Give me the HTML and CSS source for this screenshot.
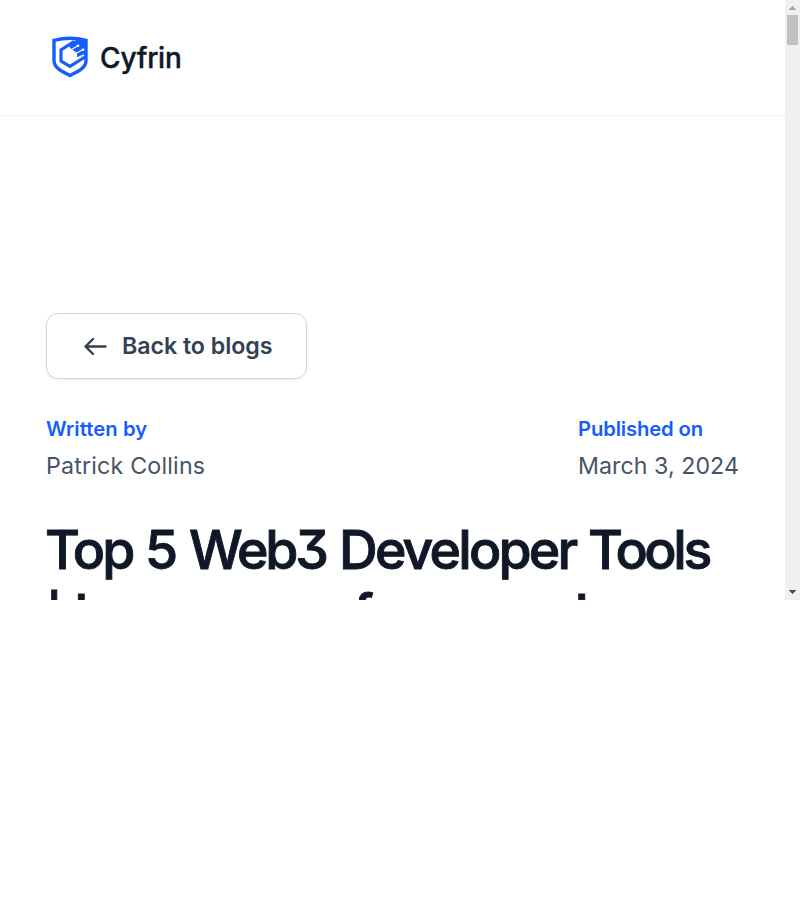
FILE: index.html
```
<!DOCTYPE html>
<html lang="en">
<head>
<meta charset="utf-8">
<title>Top 5 Web3 Developer Tools</title>
<link rel="stylesheet" href="styles.css">
</head>
<body>
<div class="viewport">
  <div class="page">
    <header class="header">
      <svg class="logo-mark" width="36" height="42" viewBox="0 0 36 42" fill="none">
        <path d="M2 4.4Q18 .2 34 4.4V24.5C34 32 26 35.5 18 39.5C10 35.5 2 32 2 24.5Z" stroke="#165dfb" stroke-width="3.4"/>
        <path d="M22 5.6L9 13.8V25.2L18 30.4L33 21" stroke="#165dfb" stroke-width="3.2"/>
        <path d="M17 8.5L24 4L35 4.5V18.5L25 22V17L23 15.5L18 12Z" fill="#165dfb"/>
        <path d="M19 13.8L25.5 10M24 17.3L30 14.2M25 21.7L32 18.8" stroke="#fff" stroke-width="1.2"/>
        <circle cx="26" cy="9.8" r="1.3" fill="#fff"/><circle cx="31" cy="13.8" r="1.3" fill="#fff"/>
      </svg>
      <span class="logo-name">Cyfrin</span>
    </header>
    <main class="article">
      <a class="back">
        <svg width="24" height="20" viewBox="0 0 24 20" fill="none" stroke="#344054" stroke-width="2.4" stroke-linecap="round" stroke-linejoin="round"><path d="M22.5 10.5H2.5M10 3L2.5 10.5L10 18"/></svg>
        <span>Back to blogs</span>
      </a>
      <div class="meta">
        <div class="meta-item"><div class="label">Written by</div><div class="value author">Patrick Collins</div></div>
        <div class="meta-item published"><div class="label">Published on</div><div class="value">March 3, 2024</div></div>
      </div>
      <h1 class="title">
        <span class="line"><span class="w-top">Top</span><span class="w-five">5</span><span class="w-web">Web3</span><span class="w-dev">Developer</span><span class="w-tools">Tools</span></span>
        <span class="line"><span class="w-bar">|</span><span class="w-improve">Improve</span><span class="w-perf">performance</span><span>in</span></span>
      </h1>
    </main>
  </div>
  <div class="scrollbar">
    <svg width="15" height="15" viewBox="0 0 15 15" shape-rendering="crispEdges"><path d="M7 6h1v1h1v1h1v1h1v1H4V9h1V8h1V7h1z" fill="#a3a3a3"/></svg>
    <div class="thumb"></div>
    <svg class="down" width="15" height="15" viewBox="0 0 15 15" shape-rendering="crispEdges"><path d="M4 5h7v1h-1v1H9v1H8v1H7V8H6V7H5V6H4z" fill="#505050"/></svg>
  </div>
</div>
</body>
</html>
```
FILE: styles.css
```
* { box-sizing: border-box; }
body { margin: 0; background: #fff; font-family: Inter, sans-serif; }
.viewport { display: flex; width: 800px; height: 600px; overflow: hidden; }
.page { width: 785px; height: 600px; overflow: hidden; }
.header { display: flex; align-items: center; height: 116px; padding: 0 0 1px 52px; border-bottom: 1px solid #f2f4f7; }
.logo-mark { flex: none; }
.logo-name { margin: 1px 0 0 12px; color: #101828; font-size: 28px; line-height: 36px; font-weight: 500; letter-spacing: -.2px; -webkit-text-stroke: .4px #101828; }
.article { padding: 197px 46px 0; }
.back { display: flex; align-items: center; width: 261px; height: 66px; padding-left: 36px; gap: 15px; border: 1px solid #d0d5dd; border-radius: 12px; box-shadow: 0 1px 3px rgba(16, 24, 40, .07); color: #344054; font-size: 23.2px; font-weight: 600; letter-spacing: -.04px; white-space: nowrap; }
.back svg { flex: none; }
.meta { display: flex; justify-content: space-between; margin-top: 35px; }
.published { width: 161px; white-space: nowrap; }
.label { color: #165dfb; font-size: 20.3px; font-weight: 600; line-height: 30px; letter-spacing: .05px; }
.published .label { letter-spacing: -.15px; }
.value { margin-top: 5px; color: #475467; font-size: 23.2px; line-height: 35px; letter-spacing: .05px; }
.author { letter-spacing: .2px; }
.title { margin: 34px 0 0; color: #101828; font-size: 53.6px; font-weight: 500; line-height: 64px; font-feature-settings: "cv09", "ss07"; -webkit-text-stroke: .9px #101828; }
.line { display: flex; height: 64px; white-space: nowrap; }
.line span { flex: none; }
.w-top { width: 100px; margin-left: -1px; letter-spacing: -3px; }
.w-five { width: 44px; letter-spacing: -2px; }
.w-web { width: 150px; letter-spacing: -3.1px; }
.w-dev { width: 249px; letter-spacing: -2.8px; }
.w-tools { letter-spacing: -3.4px; }
.w-bar { width: 29px; margin-left: -1px; padding-top: 8px; }
.w-improve { width: 202px; letter-spacing: -1.8px; }
.w-perf { width: 299px; letter-spacing: -3px; }
.scrollbar { display: flex; flex-direction: column; align-items: center; width: 15px; height: 600px; background: #f0f0f0; }
.thumb { width: 11px; height: 30px; background: #c1c1c1; }
.down { margin-top: auto; }
```
